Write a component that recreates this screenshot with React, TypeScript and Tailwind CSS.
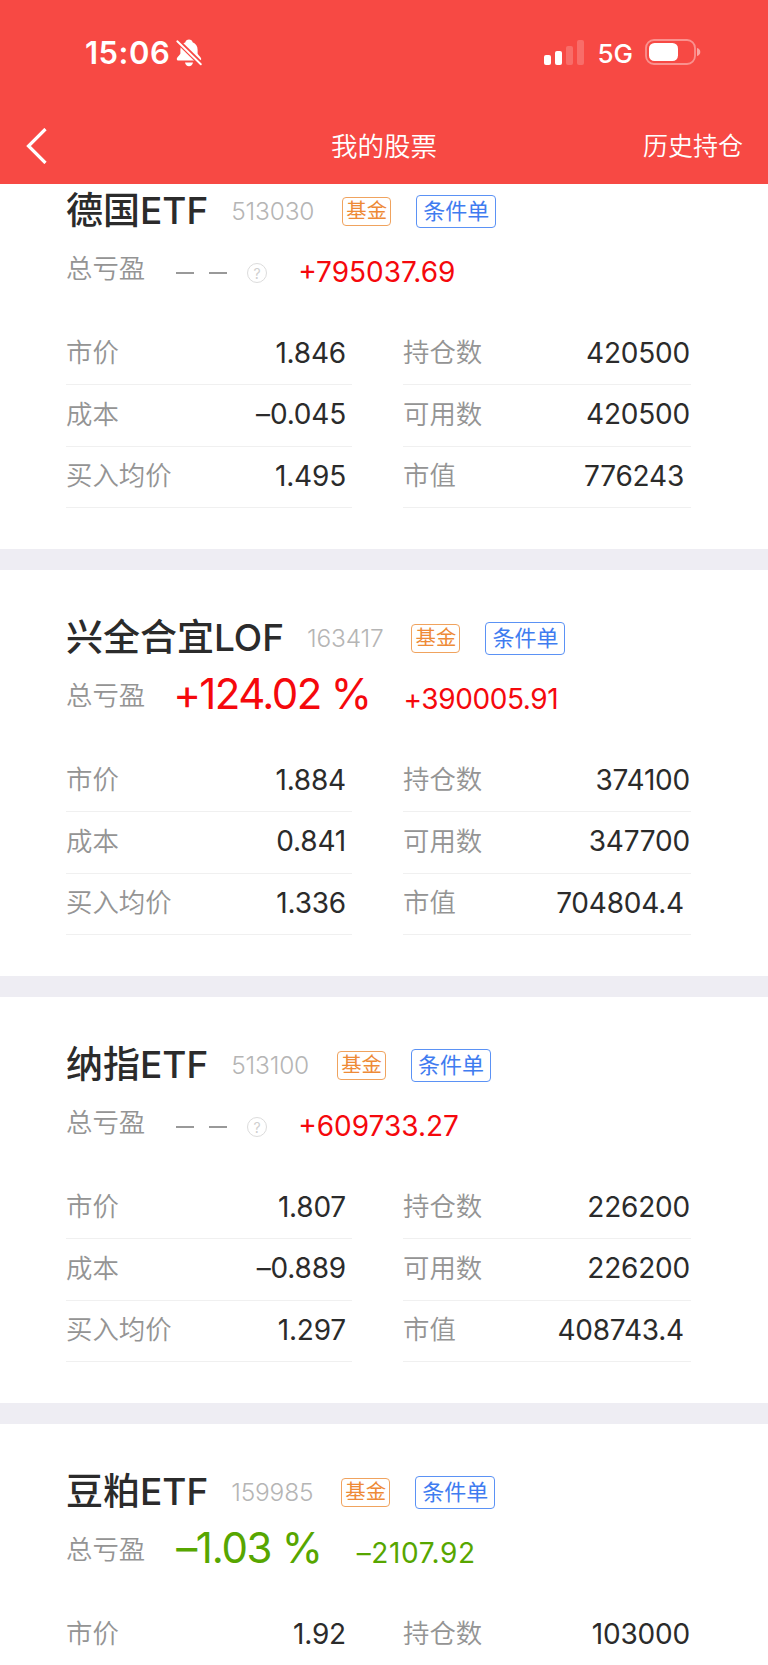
import clsx from "clsx";

type Stock = {
  name: string;
  code: string;
  percent?: string;
  amount: string;
  left: [string, string][];
  right: [string, string][];
};

const stocks: Stock[] = [
  {
    name: "德国ETF",
    code: "513030",
    amount: "+795037.69",
    left: [
      ["市价", "1.846"],
      ["成本", "–0.045"],
      ["买入均价", "1.495"],
    ],
    right: [
      ["持仓数", "420500"],
      ["可用数", "420500"],
      ["市值", "776243"],
    ],
  },
  {
    name: "兴全合宜LOF",
    code: "163417",
    percent: "+124.02 %",
    amount: "+390005.91",
    left: [
      ["市价", "1.884"],
      ["成本", "0.841"],
      ["买入均价", "1.336"],
    ],
    right: [
      ["持仓数", "374100"],
      ["可用数", "347700"],
      ["市值", "704804.4"],
    ],
  },
  {
    name: "纳指ETF",
    code: "513100",
    amount: "+609733.27",
    left: [
      ["市价", "1.807"],
      ["成本", "–0.889"],
      ["买入均价", "1.297"],
    ],
    right: [
      ["持仓数", "226200"],
      ["可用数", "226200"],
      ["市值", "408743.4"],
    ],
  },
  {
    name: "豆粕ETF",
    code: "159985",
    percent: "–1.03 %",
    amount: "–2107.92",
    left: [["市价", "1.92"]],
    right: [["持仓数", "103000"]],
  },
];

function StatusBar() {
  return (
    <div className="flex h-[105px] items-center pl-[85px] pr-[67px]">
      <span className="text-[31px] font-semibold leading-none tracking-[0.5px]">
        15:06
      </span>
      {/* Muted bell */}
      <svg className="ml-[6px] h-7 w-[26px]" viewBox="0 0 26 28">
        <path
          fill="#fff"
          d="M13 .5c-1.900 0-3.300 1.100-3.600 2.700C6.100 4.500 4.400 7.200 4.400 10.700v3.600c0 1.700-3.600 3.700-3.600 5.700 0 1 .7 1.500 1.700 1.500h21c1 0 1.700-.6 1.700-1.500 0-2-3.600-4-3.600-5.700v-3.600c0-3.500-1.700-6.200-5-7.500C16.300 1.600 14.900.5 13 .5zM9 23.500c.4 2.300 2 3.700 4 3.700s3.600-1.400 4-3.700z"
        />
        <path d="M0 .5 26 26" stroke="#f74944" strokeWidth="5" />
        <path
          d="M1.300 2.300 24.800 25.300"
          stroke="#fff"
          strokeWidth="1.900"
          strokeLinecap="round"
        />
      </svg>
      <div className="ml-auto flex items-center">
        <div className="flex h-[25px] items-end gap-1">
          <span className="h-2.5 w-[7px] rounded-[2px] bg-white" />
          <span className="h-3.5 w-[7px] rounded-[2px] bg-white" />
          <span className="h-[19px] w-[7px] rounded-[2px] bg-white/20" />
          <span className="h-[25px] w-[7px] rounded-[2px] bg-white/20" />
        </div>
        <span className="ml-[13px] mt-0.5 text-[26px] font-medium leading-none">
          5G
        </span>
        {/* Battery */}
        <svg className="mb-px ml-3 h-[26px] w-14" viewBox="0 0 56 26">
          <rect
            x="1"
            y="1"
            width="49"
            height="24"
            rx="8"
            fill="none"
            stroke="#fff"
            strokeOpacity=".4"
            strokeWidth="1.800"
          />
          <rect x="4" y="4" width="29" height="18" rx="5.500" fill="#fff" />
          <path d="M52 9c2 .5 3.300 2 3.300 4S54 16.500 52 17z" fill="#fff" fillOpacity=".5" />
        </svg>
      </div>
    </div>
  );
}

function NavBar() {
  return (
    <div className="grid h-[81px] grid-cols-3 items-center pl-[25px] pr-[25px]">
      <svg className="h-9 w-[22px]" viewBox="0 0 22 36">
        <path
          d="M20.500 1 3.500 18l17 17"
          fill="none"
          stroke="#fff"
          strokeWidth="3.200"
        />
      </svg>
      <h1 className="mt-px text-center text-[26.5px] font-[350] leading-none">
        我的股票
      </h1>
      <span className="mt-px text-right text-[25px] font-[350] leading-none">
        历史持仓
      </span>
    </div>
  );
}

function Row({ label, value, inset }: { label: string; value: string; inset: string }) {
  return (
    <div className="flex h-[61.3px] items-center justify-between border-b border-[#f0f0f0]">
      <span className="mb-0.5 text-[26.400px] font-[350] text-[#949494]">{label}</span>
      <span className={clsx("mb-0.5 text-[28px] tracking-[-0.2px] text-[#2b2b2b]", inset)}>
        {value}
      </span>
    </div>
  );
}

function StockCard({ stock }: { stock: Stock }) {
  const up = stock.amount.startsWith("+");
  const color = up ? "text-[#f5080c]" : "text-[#57a600]";

  return (
    <section className="h-[427px] border-b-[21px] border-[#eeedf3] bg-white pl-[66px] pt-[47px]">
      <div className="flex h-[42px] items-center whitespace-nowrap">
        <h2 className="text-[37px] font-medium text-[#2b2b2b]">{stock.name}</h2>
        <span className="ml-[23px] text-[24.500px] font-light tracking-[-0.2px] text-[#b5b5b5]">
          {stock.code}
        </span>
        <span className="ml-7 flex h-[29px] w-[49px] items-center justify-center rounded-[4px] border border-[#f0a35e] text-[20.400px] text-[#ee8a36]">
          基金
        </span>
        <span className="ml-[25px] flex h-[33px] w-20 items-center justify-center rounded-[4px] border-[1.500px] border-[#5b92f5] text-[22px] text-[#3f7cf0]">
          条件单
        </span>
      </div>
      <div className="mt-[15px] flex h-[44px] items-center whitespace-nowrap">
        <span className="text-[26.400px] font-[350] text-[#949494]">总亏盈</span>
        {stock.percent ? (
          <span
            className={clsx(
              "mb-[5px] text-[42px]",
              up ? "ml-[28px] tracking-[-1.6px]" : "ml-[31px] tracking-[-1.3px]",
              color
            )}
          >
            {stock.percent}
          </span>
        ) : (
          <div className="ml-[31px] mt-2 flex items-center">
            <span className="h-0.5 w-[18px] bg-[#999]" />
            <span className="ml-[15px] h-0.5 w-[18px] bg-[#999]" />
            <span className="ml-5 flex size-5 items-center justify-center rounded-full border-[1.500px] border-[#dcdcdc] text-[14px] text-[#cfcfcf]">
              ?
            </span>
          </div>
        )}
        <span
          className={clsx(
            "mt-1.5 text-[28px]",
            !stock.percent && "ml-[31px]",
            stock.percent && up && "ml-[33px] tracking-[-0.4px]",
            stock.percent && !up && "ml-[35px] tracking-[0.6px]",
            color
          )}
        >
          {stock.amount}
        </span>
      </div>
      <div className="mt-[33px] flex gap-[51px]">
        <div className="w-[286px]">
          {stock.left.map(([label, value]) => (
            <Row key={label} label={label} value={value} inset="mr-1.5" />
          ))}
        </div>
        <div className="w-[288px]">
          {stock.right.map(([label, value]) => (
            <Row
              key={label}
              label={label}
              value={value}
              inset={label === "市值" ? "mr-[7px]" : "mr-px"}
            />
          ))}
        </div>
      </div>
    </section>
  );
}

export default function App() {
  return (
    <div className="flex h-[1665px] w-[768px] flex-col overflow-hidden bg-white font-['Inter','Noto_Sans_CJK_SC',sans-serif]">
      <header className="h-[184px] shrink-0 bg-[#f74944] text-white">
        <StatusBar />
        <NavBar />
      </header>
      {/* List is scrolled slightly under the header */}
      <main className="min-h-0 flex-1 overflow-hidden">
        <div className="-mt-[41px]">
          {stocks.map((stock) => (
            <StockCard key={stock.code} stock={stock} />
          ))}
        </div>
      </main>
    </div>
  );
}
